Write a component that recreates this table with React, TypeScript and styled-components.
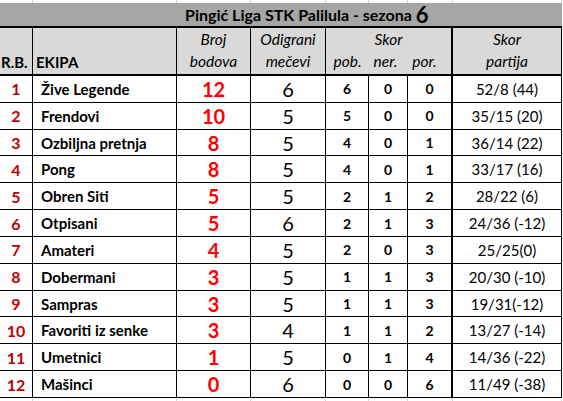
import React from "react";
import styled, { createGlobalStyle } from "styled-components";

const COLS = "33px 144px 74px 75px 43px 39px 45px 109px";

const Global = createGlobalStyle`
  html, body { margin: 0; padding: 0; background: #ffffff; }
  body { font-family: Lato, "Open Sans", "Liberation Sans", sans-serif; color: #000; }
`;

const Sheet = styled.div`
  width: 563px;
  display: flex;
  flex-direction: column;
`;

const Strip = styled.div<{ $h: number }>`
  display: grid;
  grid-template-columns: ${COLS};
  height: ${(p) => p.$h}px;
`;

const StripCell = styled.div`
  border-right: 1px solid #d6d6d6;
`;

const TitleBar = styled.div`
  width: 562px;
  height: 25px;
  box-sizing: border-box;
  background: #a6a6a6;
  border-bottom: 2px solid #000;
  display: flex;
  align-items: center;
  padding-left: 185px;
  font-weight: 700;
  font-size: 16px;
  white-space: pre;
`;

const Season = styled.span`
  font-size: 22px;
  line-height: 1;
`;

const HeaderRow = styled.div`
  width: 562px;
  display: grid;
  grid-template-columns: ${COLS};
  height: 48px;
  box-sizing: border-box;
  background: #d9d9d9;
  border-bottom: 2px solid #000;
`;

const HeadCell = styled.div<{ $thick?: boolean; $span?: number; $left?: boolean }>`
  box-sizing: border-box;
  border-right: ${(p) => (p.$thick ? 2 : 1)}px solid #000;
  grid-column: span ${(p) => p.$span ?? 1};
  display: flex;
  flex-direction: column;
  align-items: ${(p) => (p.$left ? "flex-start" : "center")};
  font-style: italic;
  font-size: 15.5px;
  line-height: 22px;
`;

const BoldHead = styled.div<{ $pad?: number }>`
  margin-top: 23px;
  font-style: normal;
  font-weight: 700;
  font-size: 15px;
  padding-left: ${(p) => p.$pad ?? 0}px;
`;

const SubHeads = styled.div`
  width: 100%;
  display: grid;
  grid-template-columns: 43px 39px 45px;
`;

const SubHead = styled.span<{ $shift?: number }>`
  text-align: center;
  transform: translateX(${(p) => p.$shift ?? 0}px);
`;

const Row = styled.div`
  width: 562px;
  display: grid;
  grid-template-columns: ${COLS};
  height: 26.833px;
  box-sizing: border-box;
  border-bottom: 1px solid #000;
`;

type Kind = "rb" | "team" | "pts" | "games" | "score" | "sets";

const Cell = styled.div<{ $kind: Kind; $thick?: boolean }>`
  box-sizing: border-box;
  border-right: ${(p) => (p.$thick ? 2 : 1)}px solid #000;
  display: flex;
  align-items: center;
  justify-content: ${(p) => (p.$kind === "team" ? "flex-start" : "center")};
  padding-left: ${(p) => (p.$kind === "team" ? 8 : 0)}px;
  white-space: nowrap;
  font-weight: ${(p) =>
    p.$kind === "games" || p.$kind === "sets" ? 400 : 700};
  font-size: ${(p) =>
    ({ rb: 16, team: 15, pts: 20, games: 20, score: 14, sets: 15 }[p.$kind])}px;
  color: ${(p) =>
    p.$kind === "rb" ? "#c00000" : p.$kind === "pts" ? "#ff0000" : "#000"};
`;

const rows: [number, string, number, number, number, number, number, string][] = [
  [1, "Žive Legende", 12, 6, 6, 0, 0, "52/8 (44)"],
  [2, "Frendovi", 10, 5, 5, 0, 0, "35/15 (20)"],
  [3, "Ozbiljna pretnja", 8, 5, 4, 0, 1, "36/14 (22)"],
  [4, "Pong", 8, 5, 4, 0, 1, "33/17 (16)"],
  [5, "Obren Siti", 5, 5, 2, 1, 2, "28/22 (6)"],
  [6, "Otpisani", 5, 6, 2, 1, 3, "24/36 (-12)"],
  [7, "Amateri", 4, 5, 2, 0, 3, "25/25(0)"],
  [8, "Dobermani", 3, 5, 1, 1, 3, "20/30 (-10)"],
  [9, "Sampras", 3, 5, 1, 1, 3, "19/31(-12)"],
  [10, "Favoriti iz senke", 3, 4, 1, 1, 2, "13/27 (-14)"],
  [11, "Umetnici", 1, 5, 0, 1, 4, "14/36 (-22)"],
  [12, "Mašinci", 0, 6, 0, 0, 6, "11/49 (-38)"],
];

const GridStrip = ({ h }: { h: number }) => (
  <Strip $h={h}>
    {Array.from({ length: 8 }).map((_, i) => (
      <StripCell key={i} />
    ))}
  </Strip>
);

export default function App() {
  return (
    <>
      <Global />
      <Sheet>
        <GridStrip h={3} />
        <TitleBar>
          {"Pingić Liga STK Palilula - sezona "}
          <Season>6</Season>
        </TitleBar>
        <HeaderRow>
          <HeadCell $left>
            <BoldHead $pad={1}>R.B.</BoldHead>
          </HeadCell>
          <HeadCell $left>
            <BoldHead $pad={3}>EKIPA</BoldHead>
          </HeadCell>
          <HeadCell>
            <span>Broj</span>
            <span>bodova</span>
          </HeadCell>
          <HeadCell>
            <span>Odigrani</span>
            <span>mečevi</span>
          </HeadCell>
          <HeadCell $span={3} $thick>
            <span>Skor</span>
            <SubHeads>
              <SubHead>pob.</SubHead>
              <SubHead $shift={-3}>ner.</SubHead>
              <SubHead $shift={-6}>por.</SubHead>
            </SubHeads>
          </HeadCell>
          <HeadCell>
            <span>Skor</span>
            <span>partija</span>
          </HeadCell>
        </HeaderRow>
        {rows.map((r) => (
          <Row key={r[0]}>
            <Cell $kind="rb">{r[0]}</Cell>
            <Cell $kind="team">{r[1]}</Cell>
            <Cell $kind="pts">{r[2]}</Cell>
            <Cell $kind="games">{r[3]}</Cell>
            <Cell $kind="score">{r[4]}</Cell>
            <Cell $kind="score">{r[5]}</Cell>
            <Cell $kind="score" $thick>
              {r[6]}
            </Cell>
            <Cell $kind="sets">{r[7]}</Cell>
          </Row>
        ))}
        <GridStrip h={3} />
      </Sheet>
    </>
  );
}
